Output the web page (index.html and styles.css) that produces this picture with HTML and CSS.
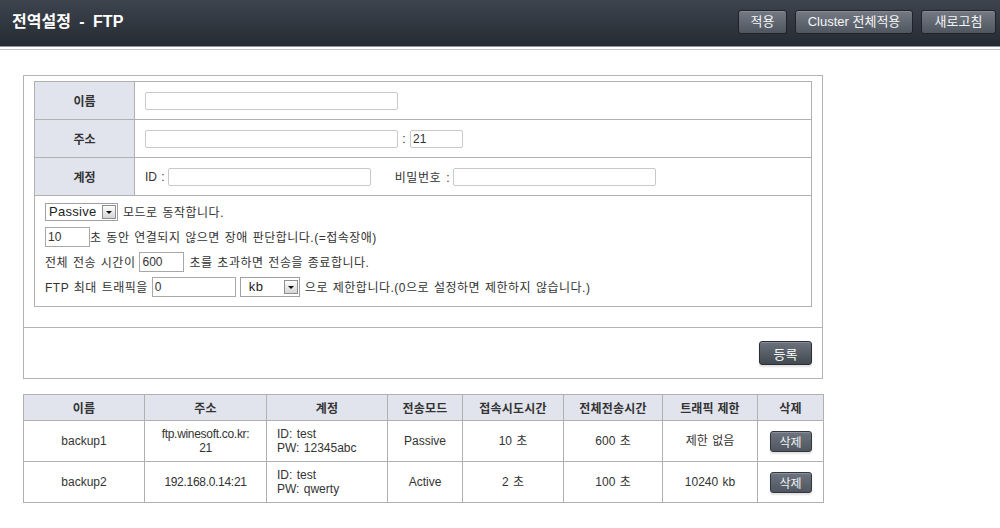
FILE: index.html
```html
<!DOCTYPE html>
<html lang="ko">
<head>
<meta charset="utf-8">
<title>전역설정 - FTP</title>
<link rel="stylesheet" href="styles.css">
</head>
<body>
<header class="topbar">
  <h1 class="title">전역설정 - FTP</h1>
  <div class="actions">
    <button class="tbtn w-apply">적용</button>
    <button class="tbtn w-cluster">Cluster 전체적용</button>
    <button class="tbtn w-refresh">새로고침</button>
  </div>
</header>
<div class="rule"></div>

<main class="content">
  <section class="box">
    <div class="box-top">
      <table class="form">
        <tr>
          <th>이름</th>
          <td class="field"><input class="txt w-name" type="text"></td>
        </tr>
        <tr>
          <th>주소</th>
          <td class="field"><input class="txt w-name" type="text"><span class="colon">:</span><input class="txt w-port" type="text" value="21"></td>
        </tr>
        <tr>
          <th>계정</th>
          <td class="field"><span class="lbl">ID :</span><input class="txt w-id" type="text"><span class="lbl pw">비밀번호 :</span><input class="txt w-id" type="text"></td>
        </tr>
        <tr>
          <td colspan="2" class="opts">
            <div class="line">
              <span class="sel w-mode"><span class="sel-text">Passive</span><span class="sel-arrow"></span></span>
              <span class="after-sel">모드로 동작합니다.</span>
            </div>
            <div class="line">
              <input class="box-in w-10" type="text" value="10"><span>초 동안 연결되지 않으면 장애 판단합니다.(=접속장애)</span>
            </div>
            <div class="line">
              <span>전체 전송 시간이</span><input class="box-in w-600 ml" type="text" value="600"><span class="ml5">초를 초과하면 전송을 종료합니다.</span>
            </div>
            <div class="line">
              <span>FTP 최대 트래픽을</span><input class="box-in w-traffic ml" type="text" value="0"><span class="sel sel-big w-kb"><span class="sel-text">kb</span><span class="sel-arrow"></span></span><span class="ml5">으로 제한합니다.(0으로 설정하면 제한하지 않습니다.)</span>
            </div>
          </td>
        </tr>
      </table>
    </div>
    <div class="box-bottom">
      <button class="dbtn w-reg">등록</button>
    </div>
  </section>

  <table class="list">
    <colgroup>
      <col class="c1"><col class="c2"><col class="c3"><col class="c4"><col class="c5"><col class="c6"><col class="c7"><col class="c8">
    </colgroup>
    <thead>
      <tr>
        <th>이름</th><th>주소</th><th>계정</th><th>전송모드</th><th>접속시도시간</th><th>전체전송시간</th><th>트래픽 제한</th><th>삭제</th>
      </tr>
    </thead>
    <tbody>
      <tr>
        <td>backup1</td>
        <td class="addr">ftp.winesoft.co.kr:<br>21</td>
        <td class="acct">ID: test<br>PW: 12345abc</td>
        <td>Passive</td>
        <td>10 초</td>
        <td>600 초</td>
        <td>제한 없음</td>
        <td><button class="dbtn w-del">삭제</button></td>
      </tr>
      <tr>
        <td>backup2</td>
        <td class="addr">192.168.0.14:21</td>
        <td class="acct">ID: test<br>PW: qwerty</td>
        <td>Active</td>
        <td>2 초</td>
        <td>100 초</td>
        <td>10240 kb</td>
        <td><button class="dbtn w-del">삭제</button></td>
      </tr>
    </tbody>
  </table>
</main>
</body>
</html>
```

FILE: styles.css
```css
html, body {
  margin: 0;
  padding: 0;
  background: #fff;
}
body {
  font-family: "Liberation Sans", "Noto Sans CJK KR", sans-serif;
  font-size: 12px;
  color: #333;
}

/* top bar */
.topbar {
  height: 47px;
  box-sizing: border-box;
  display: flex;
  align-items: flex-start;
  justify-content: space-between;
  padding: 0 4px 0 12px;
  background: linear-gradient(#3d444e, #262b32);
  border-bottom: 1px solid #8f9399;
}
.title {
  margin: 12px 0 0;
  font-size: 16px;
  line-height: 20px;
  font-weight: bold;
  color: #fff;
  word-spacing: 4px;
}
.actions {
  display: flex;
  gap: 8px;
  margin-top: 10px;
}
.tbtn {
  height: 24px;
  box-sizing: border-box;
  padding: 0;
  border: 1px solid #1f2329;
  border-radius: 3px;
  background: linear-gradient(#737a84, #50565f);
  box-shadow: inset 0 1px 0 rgba(255,255,255,0.15);
  color: #f4f4f4;
  font-family: inherit;
  font-size: 13px;
  line-height: 20px;
}
.w-apply { width: 49px; }
.w-cluster { width: 118px; }
.w-refresh { width: 75px; }

.rule {
  height: 2px;
  border-bottom: 1px solid #c2c2c2;
}

/* content */
.content {
  padding: 25px 0 0 23px;
}
.box {
  width: 800px;
  box-sizing: border-box;
  border: 1px solid #b4b4b4;
}
.box-top {
  padding: 5px 10px 20px;
  border-bottom: 1px solid #b4b4b4;
}
.form {
  width: 100%;
  border-collapse: collapse;
}
.form th,
.form td {
  border: 1px solid #b0b0b0;
  padding: 0;
}
.form th {
  width: 99px;
  height: 37px;
  background: #e1e4ed;
  font-size: 12px;
  font-weight: bold;
  color: #333;
}
.field {
  padding-left: 10px !important;
  white-space: nowrap;
}
.txt {
  height: 18px;
  box-sizing: border-box;
  border: 1px solid #c9c9c9;
  border-radius: 2px;
  padding: 0 2px;
  margin: 0;
  vertical-align: middle;
  font-family: inherit;
  font-size: 12px;
  color: #333;
}
.w-name { width: 253px; }
.w-port { width: 53px; }
.w-id { width: 203px; }
.colon {
  display: inline-block;
  width: 12px;
  text-align: center;
  vertical-align: middle;
}
.lbl {
  vertical-align: middle;
  margin-right: 3px;
  word-spacing: 1px;
}
.pw {
  margin-left: 24px;
  letter-spacing: 0.6px;
}

/* options */
.opts {
  padding: 3px 10px 7px !important;
  letter-spacing: 0.5px;
  word-spacing: 1px;
}
.line {
  height: 25px;
  display: flex;
  align-items: center;
  white-space: nowrap;
}
.box-in {
  height: 20px;
  box-sizing: border-box;
  border: 1px solid #a8a8a8;
  border-radius: 0;
  padding: 0 2px;
  margin: 0;
  font-family: inherit;
  font-size: 12px;
  color: #333;
  letter-spacing: 0;
}
.w-10 { width: 45px; }
.w-600 { width: 45px; }
.w-traffic { width: 84px; }
.ml { margin-left: 4px; }
.ml5 { margin-left: 5px; }

.sel {
  display: inline-flex;
  align-items: center;
  justify-content: space-between;
  height: 18px;
  box-sizing: border-box;
  border: 1px solid #a0a0a0;
  background: #fff;
  padding: 0 1px 0 3px;
  font-size: 13px;
  color: #222;
  letter-spacing: 0.3px;
}
.sel-big {
  height: 20px;
  margin-left: 4px;
  padding-left: 8px;
}
.w-mode { width: 73px; }
.w-kb { width: 60px; }
.sel-arrow {
  width: 14px;
  height: 14px;
  box-sizing: border-box;
  border: 1px solid #8e8e8e;
  background: linear-gradient(#fdfdfd, #d4d4d4);
  position: relative;
}
.sel-arrow::after {
  content: "";
  position: absolute;
  left: 3px;
  top: 5px;
  border-left: 3px solid transparent;
  border-right: 3px solid transparent;
  border-top: 3px solid #111;
}
.after-sel { margin-left: 5px; }

.box-bottom {
  height: 50px;
  display: flex;
  align-items: center;
  justify-content: flex-end;
  padding-right: 10px;
}
.dbtn {
  box-sizing: border-box;
  padding: 0;
  border: 1px solid #2a2f35;
  border-radius: 3px;
  background: linear-gradient(#6d737d, #434950);
  box-shadow: inset 0 1px 0 rgba(255,255,255,0.2), 0 2px 2px rgba(0,0,0,0.12);
  color: #fff;
  font-family: inherit;
}
.w-reg {
  width: 53px;
  height: 24px;
  font-size: 13px;
}
.w-del {
  width: 42px;
  height: 21px;
  font-size: 12px;
  background: linear-gradient(#6f7580, #50565f);
  border-color: #33383f;
  color: #eef0f3;
}

/* list */
.list {
  margin-top: 15px;
  width: 800px;
  table-layout: fixed;
  border-collapse: collapse;
}
.list th,
.list td {
  border: 1px solid #b0b0b0;
  padding: 0;
  text-align: center;
}
.list th {
  height: 25px;
  background: #e1e4ed;
  font-weight: bold;
  font-size: 12px;
  color: #333;
  letter-spacing: 0.2px;
}
.list td {
  height: 40px;
  line-height: 14px;
  color: #333;
  word-spacing: 1px;
}
.list td.addr {
  letter-spacing: -0.3px;
}
.list td.acct {
  text-align: left;
  padding-left: 10px;
}
.c1 { width: 121px; }
.c2 { width: 122px; }
.c3 { width: 121px; }
.c4 { width: 75px; }
.c5 { width: 101px; }
.c6 { width: 99px; }
.c7 { width: 95px; }
.c8 { width: 66px; }
```
